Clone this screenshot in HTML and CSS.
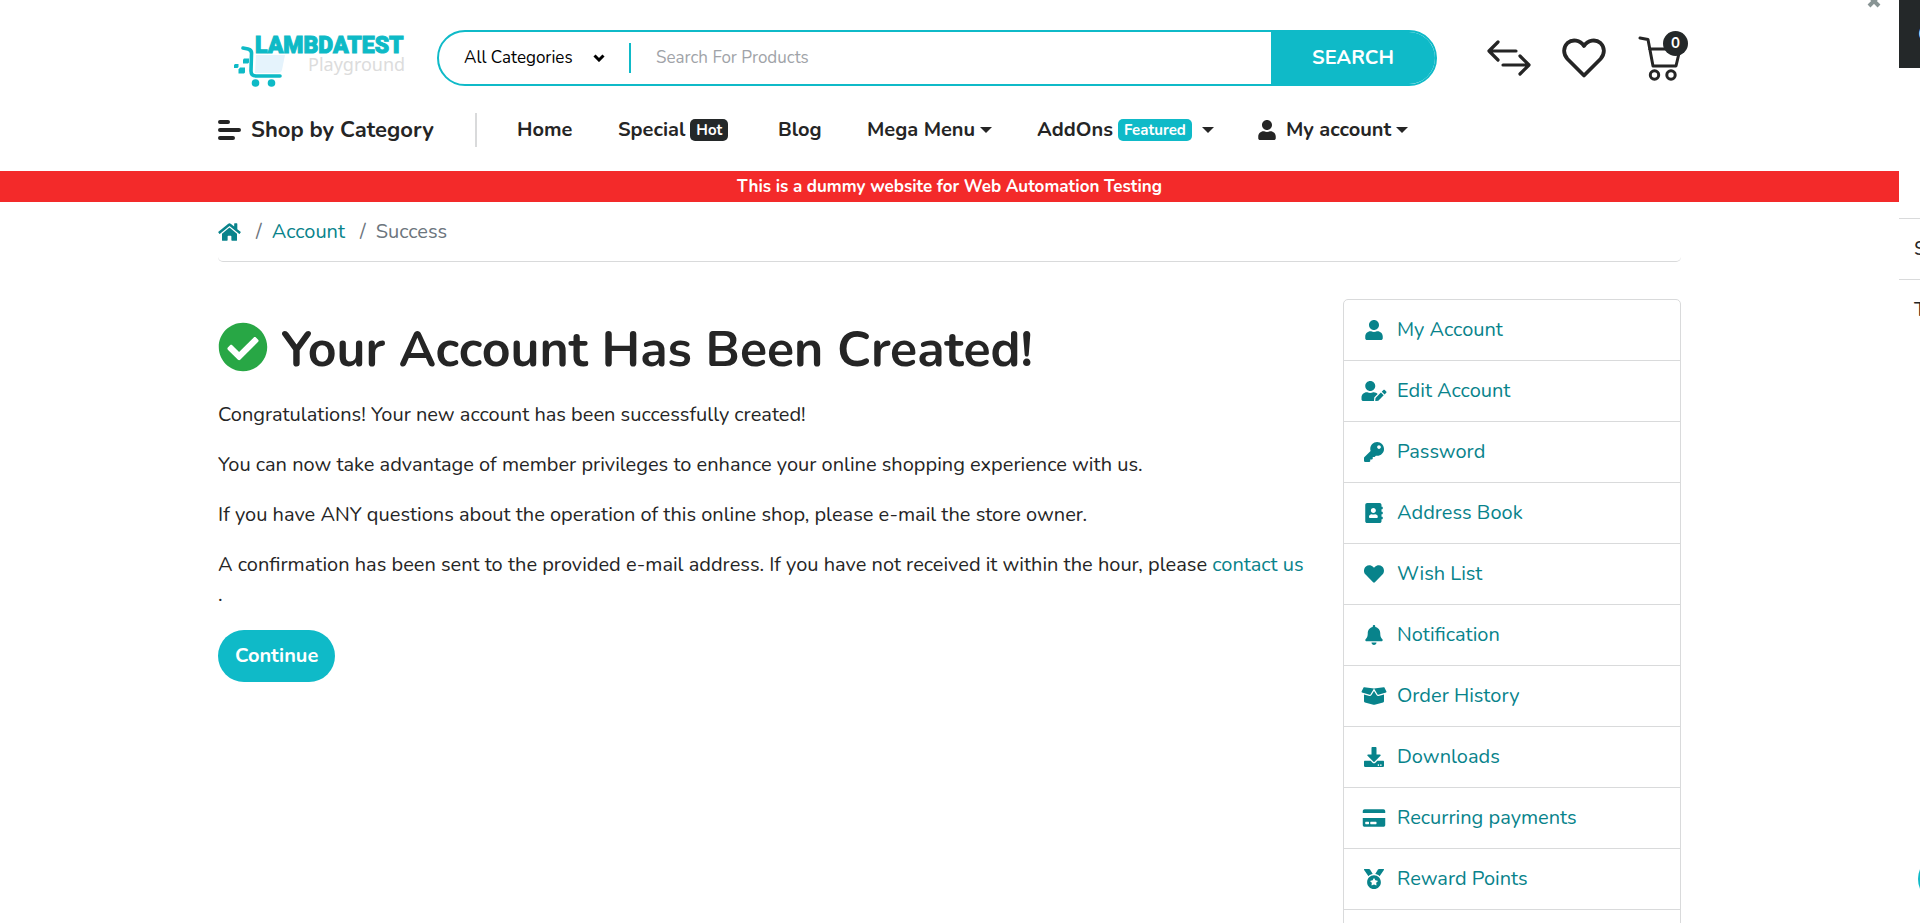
FILE: index.html
```html
<!DOCTYPE html>
<html lang="en">
<head>
<meta charset="utf-8">
<meta name="viewport" content="width=device-width, initial-scale=1">
<title>Your Account Has Been Created!</title>
<link rel="stylesheet" href="styles.css">
</head>
<body>
<div class="shell">
<div class="page">
  <button class="close" type="button" aria-label="Close"><svg viewBox="0 0 14 14"><path d="M2 2l10 10M12 2L2 12" fill="none" stroke="currentColor" stroke-width="4"/></svg></button>
  <header class="container">
    <div class="topbar">
      <a class="logo" href="#" aria-label="LambdaTest Playground">
        <svg viewBox="0 0 174 54">
          <path d="M22 21h29l-3 15q-1 3-4 3H21z" fill="#e5f3fc"/>
          <path d="M9 14l5 1q4 1 3.500 5L17 37q0 5 5 5H46" fill="none" stroke="#0ebac6" stroke-width="3.600" stroke-linecap="round"/>
          <g fill="#0ebac6"><circle cx="21.500" cy="49" r="3.800"/><circle cx="37.500" cy="49" r="3.800"/><path d="M10 24.500h5v4l-1 1H9v-4z"/><path d="M1 30h3.500v3l-1 1H0v-3z"/><path d="M6 33.500h5v5l-1 1H4.500v-4z"/></g>
          <text class="logo-name" x="21" y="19">LAMBDATEST</text>
          <text class="logo-sub" x="74" y="37">Playground</text>
        </svg>
      </a>
      <form class="search">
        <label class="category">
          <select aria-label="Category"><option>All Categories</option></select>
          <svg viewBox="0 0 12 8"><path d="M1.500 1.500L6 6l4.500-4.500" fill="none" stroke="currentColor" stroke-width="3"/></svg>
        </label>
        <input type="text" aria-label="Search" placeholder="Search For Products">
        <button type="submit">SEARCH</button>
      </form>
      <nav class="tools" aria-label="Shopping tools">
        <a href="#" aria-label="Compare"><svg class="compare" viewBox="0 0 44 36"><path d="M11 2L2 11l9 9M3 11h26M33 16l9 9-9 9M41 25H16" fill="none" stroke="currentColor" stroke-width="3.200" stroke-linecap="round" stroke-linejoin="round"/></svg></a>
        <a href="#" aria-label="Wish list"><svg class="heart" viewBox="0 0 44 40"><path d="M22 37.500L5.500 21C1 16 1 9.500 5.500 5 10.500 .8 18 2 22 8 26 2 33.500 .8 38.500 5 43 9.500 43 16 38.500 21z" fill="none" stroke="currentColor" stroke-width="3.800" stroke-linejoin="round"/></svg></a>
        <a class="cart" href="#" aria-label="Cart"><svg viewBox="0 0 44 46"><path d="M3 3l8 1.500L16 31h23l4-17H12.500" fill="none" stroke="currentColor" stroke-width="3" stroke-linecap="round" stroke-linejoin="round"/><g fill="none" stroke="currentColor" stroke-width="3"><circle cx="17.500" cy="40" r="4.200"/><circle cx="34" cy="40" r="4.200"/></g></svg><span class="count">0</span></a>
      </nav>
    </div>
    <nav class="menu" aria-label="Main">
      <a class="shop" href="#"><svg viewBox="0 0 23 22"><path d="M2 3h8M2 11h19M2 19h13" stroke="currentColor" stroke-width="4" stroke-linecap="round"/></svg>Shop by Category</a>
      <a class="home" href="#">Home</a>
      <a class="special" href="#">Special<span class="tag">Hot</span></a>
      <a class="blog" href="#">Blog</a>
      <a class="mega" href="#">Mega Menu<i class="caret"></i></a>
      <a class="addons" href="#">AddOns<span class="tag teal">Featured</span><i class="caret far"></i></a>
      <a class="mine" href="#"><svg viewBox="0 0 448 512"><use href="#user"/></svg>My account<i class="caret"></i></a>
    </nav>
  </header>
  <p class="banner">This is a dummy website for Web Automation Testing</p>
  <main class="container">
    <nav aria-label="Breadcrumb">
      <ol class="crumbs">
        <li><a href="#" aria-label="Home"><svg viewBox="0 0 576 512"><path fill="currentColor" d="M280.370 148.260L96 300.110V464a16 16 0 0 0 16 16l112.060-.29a16 16 0 0 0 15.920-16V368a16 16 0 0 1 16-16h64a16 16 0 0 1 16 16v95.640a16 16 0 0 0 16 16.050L464 480a16 16 0 0 0 16-16V300L295.670 148.260a12.190 12.190 0 0 0-15.300 0zM571.600 251.470L488 182.560V44.050a12 12 0 0 0-12-12h-56a12 12 0 0 0-12 12v72.610L318.470 43a48 48 0 0 0-61 0L4.340 251.470a12 12 0 0 0-1.600 16.900l25.500 31A12 12 0 0 0 45.150 301l235.220-193.740a12.190 12.190 0 0 1 15.300 0L530.900 301a12 12 0 0 0 16.900-1.600l25.500-31a12 12 0 0 0-1.700-16.930z"/></svg></a></li>
        <li><a href="#">Account</a></li>
        <li>Success</li>
      </ol>
    </nav>
    <div class="columns">
      <section class="content">
        <h1><svg viewBox="0 0 512 512"><path fill="currentColor" d="M504 256c0 136.967-111.033 248-248 248S8 392.967 8 256 119.033 8 256 8s248 111.033 248 248zM227.314 387.314l184-184c6.248-6.248 6.248-16.379 0-22.627l-22.627-22.627c-6.248-6.249-16.379-6.249-22.628 0L216 308.118l-70.059-70.059c-6.248-6.248-16.379-6.248-22.628 0l-22.627 22.627c-6.248 6.248-6.248 16.379 0 22.627l104 104c6.249 6.249 16.379 6.249 22.628.001z"/></svg>Your Account Has Been Created!</h1>
        <p>Congratulations! Your new account has been successfully created!</p>
        <p>You can now take advantage of member privileges to enhance your online shopping experience with us.</p>
        <p>If you have ANY questions about the operation of this online shop, please e-mail the store owner.</p>
        <p>A confirmation has been sent to the provided e-mail address. If you have not received it within the hour, please <a href="#">contact us</a><br>.</p>
        <a class="continue" href="#">Continue</a>
      </section>
      <aside class="account" aria-label="Account links">
        <a href="#"><svg viewBox="0 0 448 512"><path id="user" fill="currentColor" d="M224 256c70.700 0 128-57.300 128-128S294.700 0 224 0 96 57.300 96 128s57.300 128 128 128zm89.600 32h-16.700c-22.200 10.200-46.900 16-72.900 16s-50.600-5.800-72.900-16h-16.700C60.200 288 0 348.200 0 422.400V464c0 26.500 21.500 48 48 48h352c26.500 0 48-21.500 48-48v-41.600c0-74.200-60.200-134.400-134.400-134.400z"/></svg>My Account</a>
        <a href="#"><svg viewBox="0 0 640 512"><path fill="currentColor" d="M224 256c70.700 0 128-57.300 128-128S294.700 0 224 0 96 57.300 96 128s57.300 128 128 128zm89.600 32h-16.700c-22.200 10.200-46.900 16-72.900 16s-50.600-5.800-72.900-16h-16.700C60.200 288 0 348.200 0 422.400V464c0 26.500 21.500 48 48 48h274.900c-2.400-6.800-3.400-14-2.600-21.300l6.800-60.900 1.200-11.100 7.900-7.900 77.300-77.300c-24.500-27.700-60-45.500-99.900-45.500zm45.300 145.300l-6.800 61c-1.100 10.200 7.500 18.800 17.600 17.600l60.900-6.800 137.900-137.900-71.700-71.700-137.900 137.800zM633 268.900L595.100 231c-9.300-9.300-24.500-9.300-33.800 0l-37.800 37.800-4.100 4.100 71.800 71.700 41.800-41.800c9.300-9.400 9.300-24.500 0-33.900z"/></svg>Edit Account</a>
        <a href="#"><svg viewBox="0 0 512 512"><path fill="currentColor" d="M512 176.001C512 273.203 433.202 352 336 352c-11.220 0-22.190-1.062-32.827-3.069l-24.012 27.014A23.999 23.999 0 0 1 261.223 384H224v40c0 13.255-10.745 24-24 24h-40v40c0 13.255-10.745 24-24 24H24c-13.255 0-24-10.745-24-24v-78.059c0-6.365 2.529-12.470 7.029-16.971l161.802-161.802C163.108 213.814 160 195.271 160 176 160 78.798 238.797.001 335.999 0 433.488-.001 512 78.511 512 176.001zM336 128c0 26.510 21.490 48 48 48s48-21.490 48-48-21.490-48-48-48-48 21.490-48 48z"/></svg>Password</a>
        <a href="#"><svg viewBox="0 0 448 512"><path fill="currentColor" d="M436 160c6.600 0 12-5.400 12-12v-40c0-6.600-5.400-12-12-12h-20V48c0-26.500-21.500-48-48-48H48C21.500 0 0 21.500 0 48v416c0 26.500 21.500 48 48 48h320c26.500 0 48-21.500 48-48v-48h20c6.600 0 12-5.400 12-12v-40c0-6.600-5.400-12-12-12h-20v-64h20c6.600 0 12-5.400 12-12v-40c0-6.600-5.400-12-12-12h-20v-64h20zm-228-32c35.300 0 64 28.700 64 64s-28.700 64-64 64-64-28.700-64-64 28.700-64 64-64zm112 236.800c0 10.600-10 19.200-22.400 19.200H118.400C106 384 96 375.400 96 364.800v-19.200c0-31.800 30.100-57.600 67.200-57.600h5c12.300 5.100 25.700 8 39.800 8s27.600-2.900 39.800-8h5c37.100 0 67.200 25.800 67.200 57.600v19.200z"/></svg>Address Book</a>
        <a href="#"><svg viewBox="0 0 512 512"><path fill="currentColor" d="M462.300 62.600C407.500 15.900 326 24.300 275.700 76.200L256 96.500l-19.700-20.300C186.100 24.300 104.500 15.900 49.700 62.600c-62.800 53.600-66.100 149.800-9.900 207.900l193.500 199.800c12.500 12.900 32.800 12.900 45.300 0l193.500-199.800c56.300-58.100 53-154.300-9.800-207.900z"/></svg>Wish List</a>
        <a href="#"><svg viewBox="0 0 448 512"><path fill="currentColor" d="M224 512c35.320 0 63.970-28.650 63.970-64H160.030c0 35.350 28.650 64 63.970 64zm215.390-149.710c-19.320-20.760-55.470-51.990-55.470-154.290 0-77.700-54.480-139.900-127.940-155.160V32c0-17.670-14.320-32-31.980-32s-31.980 14.330-31.980 32v20.840C118.560 68.100 64.080 130.300 64.080 208c0 102.300-36.150 133.530-55.470 154.290-6 6.450-8.660 14.160-8.610 21.710.11 16.400 12.980 32 32.100 32h383.800c19.120 0 32-15.600 32.100-32 .05-7.550-2.610-15.270-8.610-21.710z"/></svg>Notification</a>
        <a href="#"><svg viewBox="0 0 640 512"><path fill="currentColor" d="M425.700 256c-16.900 0-32.800-9-41.400-23.400L320 126l-64.200 106.600c-8.700 14.500-24.600 23.500-41.500 23.500-4.500 0-9-.6-13.300-1.900L64 215v178c0 14.700 10 27.500 24.200 31l216.200 54.100c10.200 2.500 20.900 2.500 31 0L551.800 424c14.200-3.600 24.200-16.400 24.200-31V215l-137 39.100c-4.300 1.300-8.800 1.900-13.300 1.900zm212.600-112.200L586.800 41c-3.100-6.200-9.800-9.800-16.700-8.900L320 64l91.700 152.100c3.800 6.300 11.400 9.300 18.500 7.300l197.900-56.500c9.900-2.900 14.700-13.900 10.200-23.100zM53.200 41L1.700 143.800c-4.600 9.200.3 20.200 10.100 23l197.900 56.500c7.100 2 14.700-1 18.500-7.300L320 64 69.800 32.100c-6.900-.8-13.500 2.700-16.600 8.900z"/></svg>Order History</a>
        <a href="#"><svg viewBox="0 0 512 512"><path fill="currentColor" d="M216 0h80c13.300 0 24 10.700 24 24v168h87.700c17.800 0 26.700 21.500 14.100 34.100L269.700 378.300c-7.500 7.500-19.800 7.500-27.300 0L90.100 226.100c-12.600-12.600-3.700-34.100 14.100-34.100H192V24c0-13.300 10.700-24 24-24zm296 376v112c0 13.300-10.700 24-24 24H24c-13.300 0-24-10.700-24-24V376c0-13.300 10.700-24 24-24h146.700l49 49c20.100 20.100 52.500 20.100 72.600 0l49-49H488c13.300 0 24 10.700 24 24zm-124 88c0-11-9-20-20-20s-20 9-20 20 9 20 20 20 20-9 20-20zm64 0c0-11-9-20-20-20s-20 9-20 20 9 20 20 20 20-9 20-20z"/></svg>Downloads</a>
        <a href="#"><svg viewBox="0 0 576 512"><path fill="currentColor" d="M0 432c0 26.500 21.500 48 48 48h480c26.500 0 48-21.500 48-48V256H0v176zm192-68c0-6.600 5.400-12 12-12h136c6.600 0 12 5.400 12 12v40c0 6.600-5.400 12-12 12H204c-6.600 0-12-5.400-12-12v-40zm-128 0c0-6.600 5.400-12 12-12h72c6.600 0 12 5.400 12 12v40c0 6.600-5.400 12-12 12H76c-6.600 0-12-5.400-12-12v-40zM576 80v48H0V80c0-26.500 21.500-48 48-48h480c26.500 0 48 21.500 48 48z"/></svg>Recurring payments</a>
        <a href="#"><svg viewBox="0 0 512 512"><path fill="currentColor" d="M223.750 130.750L154.620 15.540A31.997 31.997 0 0 0 127.180 0H16.030C3.080 0-4.500 14.570 2.920 25.180l111.270 158.960c29.720-27.770 67.520-46.830 109.560-53.390zM495.970 0H384.820c-11.240 0-21.660 5.900-27.440 15.540l-69.130 115.210c42.040 6.560 79.840 25.620 109.560 53.380L509.080 25.180C516.500 14.570 508.920 0 495.970 0zM256 160c-97.200 0-176 78.800-176 176s78.800 176 176 176 176-78.800 176-176-78.800-176-176-176zm92.520 157.260l-37.930 36.960 8.970 52.220c1.600 9.360-8.260 16.510-16.650 12.090L256 393.880l-46.900 24.650c-8.400 4.450-18.250-2.740-16.650-12.090l8.970-52.220-37.930-36.960c-6.820-6.640-3.050-18.230 6.350-19.590l52.430-7.640 23.430-47.520c2.110-4.280 6.190-6.390 10.280-6.390 4.110 0 8.220 2.140 10.330 6.390l23.430 47.520 52.430 7.640c9.400 1.360 13.170 12.950 6.350 19.590z"/></svg>Reward Points</a>
      </aside>
    </div>
  </main>
</div>
<aside class="drawer" aria-label="Cart summary">
  <h2>Cart</h2>
  <div class="drawer-row">Sub-Total:</div>
  <div class="drawer-row">Total:</div>
  <button class="bubble" type="button" aria-label="Chat"></button>
</aside>
</div>
</body>
</html>
```
FILE: styles.css
```css
* { box-sizing: border-box; }
body {
  margin: 0;
  background: #fff;
  color: #252525;
  font: 20px/30px Nunito, Lato, "Open Sans", sans-serif;
}
a { color: #08838b; text-decoration: none; }
button, input, select { font: inherit; border: 0; background: none; padding: 0; margin: 0; }
svg { display: block; flex: none; }

.shell { display: flex; height: 100vh; overflow: hidden; }
.page { flex: 1; min-width: 0; position: relative; }
.container { max-width: 1463px; margin: 0 auto; }

.close { position: absolute; top: -6px; right: 18px; color: #889494; }
.close svg { width: 14px; height: 14px; }

/* header */
.topbar { display: flex; align-items: center; padding: 28px 0 0; }
.logo { margin: 6px 29px 0 16px; }
.logo svg { width: 174px; height: 54px; overflow: visible; }
.logo-name { font: 900 23px Roboto, sans-serif; fill: #0ebac6; stroke: #0ebac6; stroke-width: 1px; }
.logo-sub { font: 18px "Noto Sans", sans-serif; fill: #dcdcdc; }
.search {
  flex: 1;
  display: flex;
  height: 56px;
  border: 2px solid #0fbac8;
  border-radius: 28px;
  overflow: hidden;
}
.category { display: flex; align-items: center; width: 192px; padding-left: 25px; gap: 12px; align-self: center; height: 30px; border-right: 2px solid #0fbac8; }
.category select { appearance: none; width: 117px; font-size: 17px; line-height: 30px; color: #000; }
.category svg { width: 12px; height: 8px; color: #000; }
.search input { flex: 1; min-width: 0; padding-left: 25px; font-size: 17px; outline: 0; }
.search input::placeholder { color: #a0a3a8; opacity: 1; }
.search button { width: 164px; background: #0fbac8; color: #fff; font-weight: 700; }
.tools { display: flex; align-items: center; margin-left: 50px; }
.tools a { color: #252525; }
.compare { width: 44px; height: 36px; margin-right: 31px; }
.heart { width: 44px; height: 40px; margin-right: 31px; }
.cart { position: relative; }
.cart svg { width: 44px; height: 46px; }
.count {
  position: absolute;
  top: -4px;
  right: -7px;
  width: 25px;
  height: 25px;
  border-radius: 50%;
  background: #242829;
  color: #fff;
  font-size: 15px;
  font-weight: 700;
  line-height: 25px;
  text-align: center;
}

.menu { display: flex; align-items: center; height: 83px; font-weight: 700; white-space: nowrap; }
.menu a { display: flex; align-items: center; color: #252525; }
.menu .shop { width: 259px; height: 34px; margin-right: 40px; gap: 10px; font-size: 22px; border-right: 2px solid #d9dadb; }
.shop svg { width: 23px; height: 22px; }
.home { width: 101px; }
.special { width: 160px; }
.blog { width: 89px; }
.mega { width: 170px; }
.addons { width: 221px; }
.mine svg { width: 18px; height: 20px; margin-right: 10px; }
.tag { margin-left: 5px; padding: 0 6px; border-radius: 5px; background: #242829; color: #fff; font-size: 15px; line-height: 22px; }
.teal { background: #0fbac8; }
.caret { margin-left: 5px; border: 6px solid transparent; border-top-color: #252525; border-bottom: 0; }
.far { margin-left: 10px; }

.banner { margin: 0; background: #f32a2a; color: #fff; font-size: 17px; font-weight: 700; line-height: 31px; text-align: center; }

/* breadcrumb */
.crumbs { display: flex; margin: 0; padding: 15px 0 14px; list-style: none; border-bottom: 1px solid #d9dadb; border-radius: 5px; color: #6c757d; }
.crumbs li { display: flex; align-items: center; }
.crumbs li + li::before { content: "/"; padding: 0 10px 0 15px; color: #6c757d; }
.crumbs svg { width: 23px; height: 20px; }

.columns { display: flex; gap: 38px; padding-top: 37px; }
.content { flex: 1; min-width: 0; padding-top: 21px; }
.content h1 { display: flex; align-items: flex-start; gap: 13px; margin: 0 0 20px; font-size: 50px; line-height: 60px; }
.content h1 svg { width: 50px; height: 50px; margin-top: 2px; color: #28a745; }
.content p { margin: 0 0 20px; }
.continue { display: inline-block; padding: 12px 17px; border-radius: 26px; background: #0fbac8; color: #fff; font-weight: 700; line-height: 28px; }

.account { width: 338px; height: 700px; border: 1px solid #d9dadb; border-radius: 5px; }
.account a { display: flex; align-items: center; gap: 10px; height: 61px; padding-left: 17px; border-bottom: 1px solid #d9dadb; }
.account svg { width: 26px; height: 20px; }

/* off-canvas cart, its edge showing at the right */
.drawer { width: 21px; overflow: hidden; position: relative; white-space: nowrap; }
.drawer h2 { margin: 0 0 150px; padding-left: 19px; background: #242829; color: #fff; font-size: 24px; line-height: 68px; }
.drawer-row { height: 61px; padding-left: 15px; border-top: 1px solid #d9dadb; line-height: 60px; }
.bubble { position: absolute; left: 19px; bottom: 19px; width: 50px; height: 50px; border-radius: 50%; background: #0fbac8; }
```
